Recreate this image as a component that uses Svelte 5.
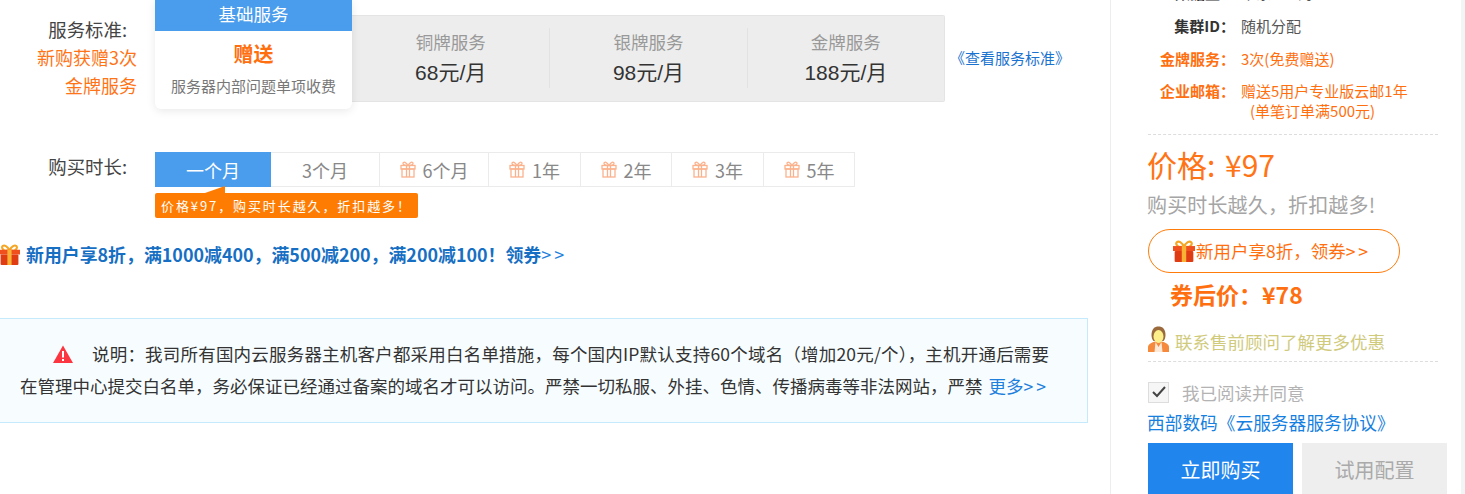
<script>
  const tiers = [
    { name: "铜牌服务", price: "68元/月" },
    { name: "银牌服务", price: "98元/月" },
    { name: "金牌服务", price: "188元/月" },
  ];
  const periods = [
    { label: "一个月", w: 116, active: true },
    { label: "3个月", w: 109 },
    { label: "6个月", w: 109, gift: true },
    { label: "1年", w: 92, gift: true },
    { label: "2年", w: 91, gift: true },
    { label: "3年", w: 92, gift: true },
    { label: "5年", w: 90, gift: true },
  ];
</script>

{#snippet giftSolid(size)}
  <svg class="gift-solid" width={size} height={size} viewBox="0 0 20 20">
    <path d="M10 6C8 2 5 .5 3.500 2S4 6 6 6.500zM10 6c2-4 5-5.500 6.500-4S16 6 14 6.500z" fill="none" stroke="#f5a623" stroke-width="2" />
    <rect x="0" y="5.500" width="20" height="4.500" fill="#f0501e" />
    <rect x="1.500" y="10" width="17" height="10" rx="1" fill="#e03c14" />
    <rect x="8" y="5.500" width="4" height="14.500" fill="#f9b233" />
  </svg>
{/snippet}

<div class="page">
  <main class="main">
    <section class="row-service">
      <div class="service-label">
        <div class="label">服务标准:</div>
        <div class="orange-note">新购获赠3次<br />金牌服务</div>
      </div>
      <div class="tiers">
        <div class="basic">
          <div class="basic-head">基础服务</div>
          <div class="basic-gift">赠送</div>
          <div class="basic-desc">服务器内部问题单项收费</div>
        </div>
        <div class="tier-list">
          {#each tiers as t, i}
            <div class="tier" class:first={i === 0}>
              <div class="tier-name">{t.name}</div>
              <div class="tier-price">{t.price}</div>
            </div>
          {/each}
        </div>
      </div>
      <a class="std-link" href="#/std">《查看服务标准》</a>
    </section>

    <section class="row-period">
      <div class="label period-label">购买时长:</div>
      <div>
        <div class="periods">
          {#each periods as p}
            <div class="period" class:active={p.active} style="width:{p.w}px">
              {#if p.gift}
                <svg class="gift-line" width="16" height="17" viewBox="0 0 16 17" fill="none" stroke="#fbb28c" stroke-width="1.300">
                  <path d="M8 4.500C6 1 3.500.5 3 2s1.500 2.500 5 2.500zM8 4.500C10 1 12.500.5 13 2s-1.500 2.500-5 2.500z" />
                  <rect x="1" y="4.500" width="14" height="3.500" />
                  <rect x="2" y="8" width="12" height="8" />
                  <path d="M6.500 4.500V16M9.500 4.500V16" />
                </svg>
              {/if}
              {p.label}
            </div>
          {/each}
        </div>
        <div class="tip">价格¥97，购买时长越久，折扣越多！</div>
      </div>
    </section>

    <a class="coupon" href="#/coupon">
      {@render giftSolid(21)}
      <span>新用户享8折，满1000减400，满500减200，满200减100！领券<i>&gt;&gt;</i></span>
    </a>

    <section class="notice">
      <p>
        <svg class="warn" width="20" height="18" viewBox="0 0 20 18"><path d="M10 0.500L20 18H0z" fill="#fb3640" /><rect x="9" y="6" width="2" height="6.500" fill="#fff" /><rect x="9" y="14" width="2" height="2" fill="#fff" /></svg>
        <span class="first-line">说明：我司所有国内云服务器主机客户都采用白名单措施，每个国内IP默认支持60个域名（增加20元/个），主机开通后需要</span>
      </p>
      <p class="second">在管理中心提交白名单，务必保证已经通过备案的域名才可以访问。严禁一切私服、外挂、色情、传播病毒等非法网站，严禁 <a href="#/more">更多<i>&gt;&gt;</i></a></p>
    </section>
  </main>

  <aside class="side">
    <dl class="specs">
      <div class="spec clipped"><dt>数据盘：</dt><dd>华东 - 上海</dd></div>
      <div class="spec"><dt>集群ID：</dt><dd>随机分配</dd></div>
      <div class="spec hot"><dt>金牌服务：</dt><dd>3次(免费赠送)</dd></div>
      <div class="spec hot mail"><dt>企业邮箱：</dt><dd>赠送5用户专业版云邮1年<br /><span>(单笔订单满500元)</span></dd></div>
    </dl>
    <div class="price">价格: ¥97</div>
    <div class="longer">购买时长越久，折扣越多!</div>
    <a class="pill" href="#/coupon">{@render giftSolid(22)}新用户享8折，领券<i>&gt;&gt;</i></a>
    <div class="after">券后价：¥78</div>
    <div class="advisor">
      <svg width="21" height="26" viewBox="0 0 21 26">
        <path d="M0 26v-5c0-3 4-4.500 7-5.500h7c3 1 7 2.500 7 5.500v5z" fill="#f58a3c" />
        <path d="M7.500 16l3 5 3-5 1 10h-8z" fill="#fde9d8" />
        <path d="M3.500 9c0-6 3-8.500 7-8.500s7 2.500 7 8.500c0 3-1 5-2 6h-10c-1-1-2-3-2-6z" fill="#9a6a3c" />
        <ellipse cx="10.500" cy="10.500" rx="5" ry="6.500" fill="#fdf08a" />
      </svg>
      <span>联系售前顾问了解更多优惠</span>
    </div>
    <label class="agree">
      <span class="check"><svg width="14" height="12" viewBox="0 0 14 12" fill="none" stroke="#444" stroke-width="2"><path d="M1 6l4 4 8-9" /></svg></span>
      我已阅读并同意
    </label>
    <a class="terms" href="#/terms">西部数码《云服务器服务协议》</a>
    <div class="actions">
      <button class="buy">立即购买</button>
      <button class="try">试用配置</button>
    </div>
  </aside>
</div>

<style>
  :global(body) {
    margin: 0;
    background: #fff;
    overflow: hidden;
  }
  .page {
    display: flex;
    width: 1465px;
    height: 494px;
    overflow: hidden;
    font-family: "Noto Sans CJK SC", "Liberation Sans", sans-serif;
    color: #333;
  }
  a {
    text-decoration: none;
  }
  i {
    font-style: normal;
  }
  .main {
    width: 1111px;
    flex: none;
    box-sizing: border-box;
    border-right: 1px solid #ededed;
  }
  .row-service {
    display: flex;
    height: 152px;
    box-sizing: border-box;
  }
  .service-label {
    width: 137px;
    flex: none;
    text-align: right;
    padding-top: 17px;
  }
  .label {
    font-size: 18.400px;
    line-height: 24px;
    color: #444;
    padding-right: 10px;
  }
  .orange-note {
    font-size: 18px;
    line-height: 28px;
    color: #ff7416;
    margin-top: 2px;
  }
  .tiers {
    display: flex;
    margin-left: 18px;
    align-items: flex-start;
    position: relative;
  }
  .basic {
    width: 197px;
    height: 109px;
    background: #fff;
    border-radius: 0 0 6px 6px;
    box-shadow: 0 2px 10px rgba(0, 0, 0, 0.09);
    text-align: center;
    position: relative;
    z-index: 1;
  }
  .basic-head {
    height: 31px;
    line-height: 27px;
    background: #4a9ced;
    color: #fff;
    font-size: 17.500px;
  }
  .basic-gift {
    margin-top: 9px;
    font-size: 20px;
    line-height: 28px;
    font-weight: 700;
    color: #ff6f0f;
  }
  .basic-desc {
    margin-top: 8px;
    font-size: 15px;
    line-height: 20px;
    color: #777;
  }
  .tier-list {
    display: flex;
    width: 593px;
    height: 87px;
    margin-top: 15px;
    background: #ededed;
    border: 1px solid #e4e4e4;
    border-left: none;
    border-radius: 0 2px 2px 0;
    box-sizing: border-box;
    padding-top: 12px;
  }
  .tier {
    width: 198px;
    height: 60px;
    text-align: center;
    border-left: 1px solid #e2e2e2;
    box-sizing: border-box;
  }
  .tier.first {
    border-left: none;
  }
  .tier-name {
    font-size: 17.500px;
    line-height: 28px;
    color: #999;
  }
  .tier-price {
    font-size: 21px;
    line-height: 33px;
    color: #333;
    font-family: "Liberation Sans", "Noto Sans CJK SC", sans-serif;
  }
  .std-link {
    font-size: 15px;
    color: #1b73d0;
    margin: 48px 0 0 5px;
    line-height: 20px;
    height: 20px;
    white-space: nowrap;
  }
  .row-period {
    display: flex;
  }
  .period-label {
    width: 127px;
    flex: none;
    text-align: right;
    box-sizing: content-box;
    padding-top: 2px;
  }
  .periods {
    display: flex;
    margin-left: 18px;
    height: 35px;
    border: 1px solid #ebebeb;
    box-sizing: border-box;
    width: 700px;
  }
  .period {
    display: flex;
    align-items: center;
    justify-content: center;
    gap: 7px;
    box-sizing: border-box;
    border-right: 1px solid #ebebeb;
    font-size: 18px;
    color: #888;
    flex: none;
  }
  .period:last-child {
    border-right: none;
  }
  .period.active {
    background: #4a9ced;
    color: #fff;
    margin: -1px 0 -1px -1px;
    height: 35px;
    border-right: none;
  }
  .tip {
    position: relative;
    margin: 6px 0 0 18px;
    width: 263px;
    height: 25px;
    line-height: 25px;
    background: #ff7c02;
    border-radius: 2px;
    color: #fff;
    font-size: 13px;
    padding-left: 6px;
    box-sizing: border-box;
    letter-spacing: 1.900px;
    white-space: nowrap;
  }
  .tip::before {
    content: "";
    position: absolute;
    left: 50px;
    top: -7px;
    border-right: 20px solid #ff7c02;
    border-top: 7px solid transparent;
  }
  .coupon {
    display: flex;
    align-items: center;
    gap: 6px;
    margin: 24px 0 0 -1px;
    height: 24px;
    font-size: 17.900px;
    font-weight: 700;
    color: #176fc3;
    white-space: nowrap;
  }
  .coupon i,
  .notice i,
  .pill i {
    font-weight: 400;
    letter-spacing: 3px;
    color: #1e7fdd;
  }
  .pill i {
    color: inherit;
  }
  .gift-solid {
    flex: none;
  }
  .notice {
    margin: 52px 0 0 -1px;
    width: 1089px;
    height: 105px;
    box-sizing: border-box;
    background: #f7fdff;
    border: 1px solid #c5eafb;
    padding-top: 19px;
  }
  .notice p {
    margin: 0;
    font-size: 17.500px;
    line-height: 32px;
    color: #333;
    white-space: nowrap;
    padding-left: 53px;
    display: flex;
    align-items: center;
    gap: 19px;
  }
  .first-line {
    letter-spacing: 0.200px;
  }
  .notice p.second {
    display: block;
    padding-left: 20px;
  }
  .notice a {
    color: #1e7fdd;
    margin-left: 2px;
  }
  .warn {
    flex: none;
  }
  .side {
    flex: none;
    width: 354px;
    box-sizing: border-box;
    padding-left: 37px;
    border-right: 4px solid #f1f5f5;
    position: relative;
  }
  .specs {
    margin: 0;
    width: 290px;
    height: 135px;
    border-bottom: 1px dashed #ddd;
    box-sizing: border-box;
    padding-top: 14px;
  }
  .spec {
    display: flex;
    font-size: 15px;
    line-height: 24px;
    margin-bottom: 9px;
  }
  .spec.clipped {
    margin-top: -33px;
  }
  .spec dt {
    width: 87px;
    text-align: right;
    font-weight: 700;
    flex: none;
  }
  .spec dd {
    margin: 0 0 0 6px;
    color: #555;
  }
  .hot dt,
  .hot dd {
    color: #ff6f0f;
  }
  .mail {
    line-height: 20px;
    margin-top: 10px;
  }
  .mail span {
    margin-left: 9px;
  }
  .price {
    font-size: 30px;
    line-height: 40px;
    color: #ff7416;
    margin-top: 9px;
    margin-left: -1px;
    word-spacing: 3px;
  }
  .longer {
    font-size: 20px;
    line-height: 28px;
    color: #a5a5a5;
    margin: 7px 0 0 -1px;
    letter-spacing: 0.150px;
  }
  .pill {
    display: flex;
    align-items: center;
    justify-content: center;
    width: 252px;
    height: 44px;
    margin-top: 10px;
    box-sizing: border-box;
    border: 1px solid #ff7c0a;
    border-radius: 22px;
    color: #ff6f0f;
    font-size: 17.500px;
    line-height: 40px;
    white-space: nowrap;
    padding-right: 4px;
  }
  .pill svg {
    margin-right: 1px;
  }
  .after {
    font-size: 23px;
    font-weight: 700;
    line-height: 30px;
    color: #ff6f0f;
    margin: 6px 0 0 22px;
  }
  .advisor {
    display: flex;
    align-items: flex-end;
    gap: 6px;
    width: 290px;
    height: 53px;
    padding-bottom: 9px;
    box-sizing: border-box;
    font-size: 17.500px;
    line-height: 24px;
    color: #d0ca7d;
    border-bottom: 1px dashed #ddd;
  }
  .advisor span {
    margin-bottom: -2px;
  }
  .advisor svg {
    flex: none;
  }
  .agree {
    display: flex;
    align-items: center;
    gap: 13px;
    margin-top: 18px;
    height: 24px;
    font-size: 17.500px;
    color: #b3b3b3;
  }
  .check {
    display: flex;
    align-items: center;
    justify-content: center;
    width: 21px;
    height: 21px;
    border: 1px solid #ddd;
    box-sizing: border-box;
    background: #f6f6f6;
  }
  .terms {
    display: block;
    font-size: 17.700px;
    line-height: 24px;
    color: #1680e0;
    margin-top: 6px;
    margin-left: -1px;
    white-space: nowrap;
  }
  .actions {
    display: flex;
    gap: 9px;
    margin-top: 9px;
  }
  .actions button {
    width: 145px;
    height: 52px;
    border: none;
    font-family: inherit;
    font-size: 20px;
  }
  .buy {
    background: #2185ee;
    color: #fff;
  }
  .try {
    background: #eee;
    color: #aaa;
  }
</style>
